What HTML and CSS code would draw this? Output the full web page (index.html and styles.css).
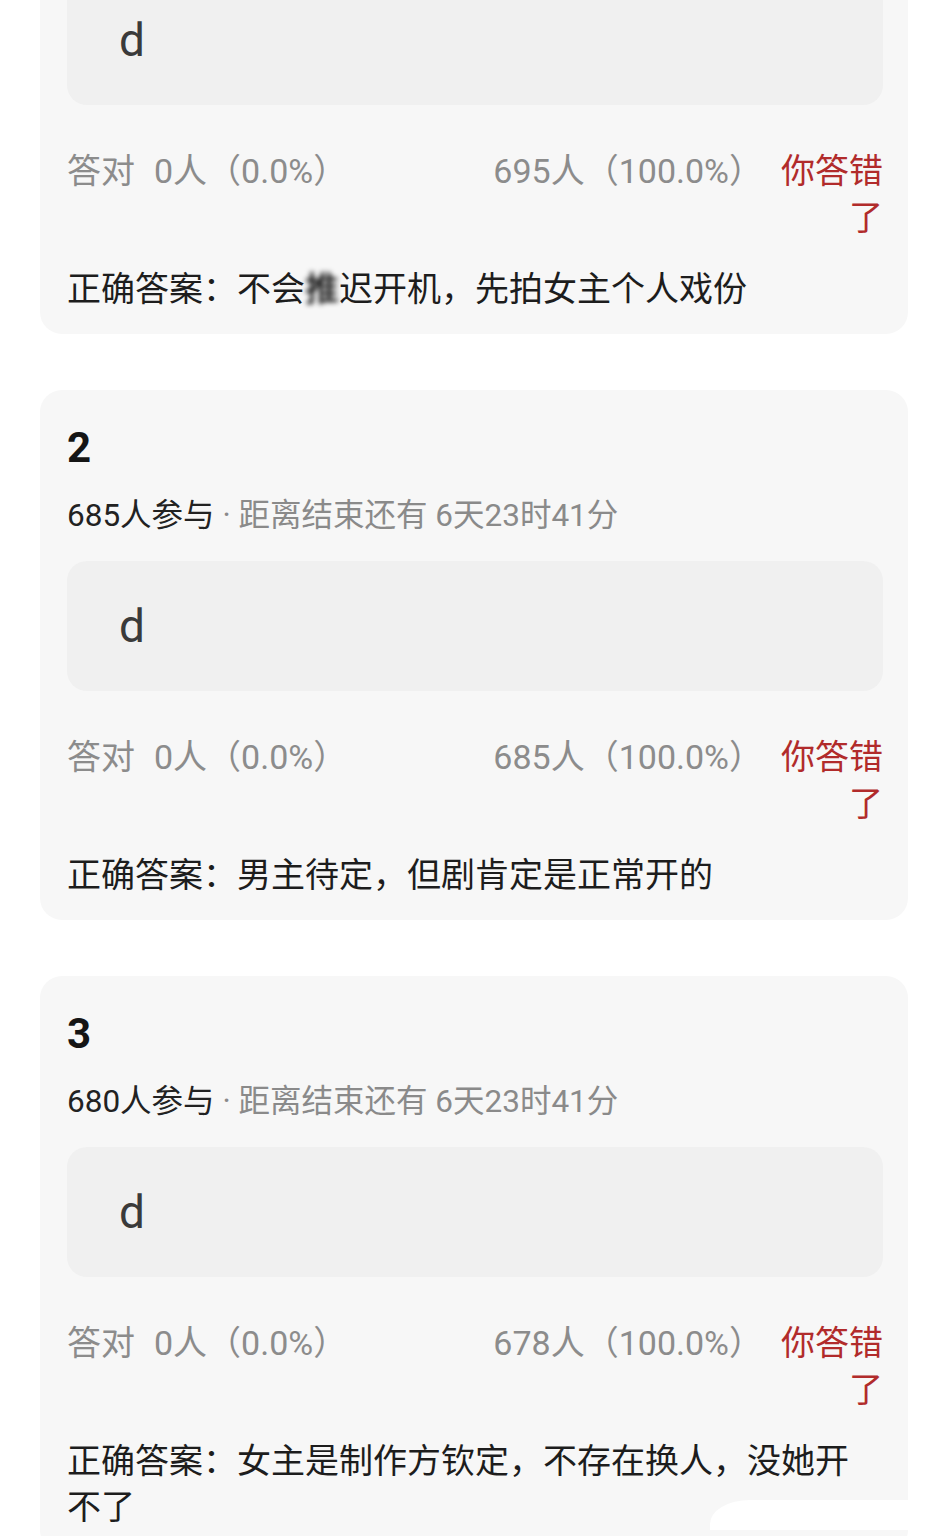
FILE: index.html
```html
<!DOCTYPE html>
<html lang="zh-CN">
<head>
<meta charset="utf-8">
<title>竞猜结果</title>
<link rel="stylesheet" href="styles.css">
</head>
<body>
<main class="feed">
  <section class="card">
    <h2 class="num">1</h2>
    <p class="meta"><span class="count">695人参与</span><span class="remain"> · 距离结束还有 6天23时41分</span></p>
    <div class="option"><span class="opt-text">d</span></div>
    <div class="stats">
      <span class="right"><span class="label">答对</span>0人（0.0%）</span>
      <span class="wrong">695人（100.0%）</span>
      <span class="verdict">你答错了</span>
    </div>
    <p class="answer">正确答案：不会<span class="blur">推</span>迟开机，先拍女主个人戏份</p>
  </section>

  <section class="card">
    <h2 class="num">2</h2>
    <p class="meta"><span class="count">685人参与</span><span class="remain"> · 距离结束还有 6天23时41分</span></p>
    <div class="option"><span class="opt-text">d</span></div>
    <div class="stats">
      <span class="right"><span class="label">答对</span>0人（0.0%）</span>
      <span class="wrong">685人（100.0%）</span>
      <span class="verdict">你答错了</span>
    </div>
    <p class="answer">正确答案：男主待定，但剧肯定是正常开的</p>
  </section>

  <section class="card">
    <h2 class="num">3</h2>
    <p class="meta"><span class="count">680人参与</span><span class="remain"> · 距离结束还有 6天23时41分</span></p>
    <div class="option"><span class="opt-text">d</span></div>
    <div class="stats">
      <span class="right"><span class="label">答对</span>0人（0.0%）</span>
      <span class="wrong">678人（100.0%）</span>
      <span class="verdict">你答错了</span>
    </div>
    <p class="answer">正确答案：女主是制作方钦定，不存在换人，没她开不了</p>
  </section>
</main>
<div class="corner"></div>
</body>
</html>
```

FILE: styles.css
```css
html, body {
  margin: 0;
  padding: 0;
  background: #ffffff;
}

body {
  font-family: Roboto, "Noto Sans CJK SC", sans-serif;
  color: #1f1f1f;
  overflow: hidden;
  position: relative;
  height: 1536px;
}

.feed {
  margin-top: -196px;
  padding: 0 40px;
  display: flex;
  flex-direction: column;
  gap: 56px;
}

.card {
  background: #f7f7f7;
  border-radius: 22px;
  padding: 33px 25px 22px 27px;
}

.num {
  margin: 0;
  font-size: 42px;
  line-height: 50px;
  font-weight: 700;
  color: #151515;
}

.meta {
  margin: 21px 0 0;
  font-size: 31.5px;
  line-height: 44px;
}

.count {
  color: #222;
}

.remain {
  color: #8a8a8a;
}

.option {
  margin-top: 23px;
  height: 130px;
  background: #f0f0f0;
  border-radius: 20px;
  display: flex;
  align-items: center;
  padding-left: 52px;
}

.opt-text {
  font-size: 46px;
  color: #3a3a3a;
}

.stats {
  margin-top: 43px;
  display: flex;
  align-items: flex-start;
  font-size: 34px;
  line-height: 47px;
  color: #8c8c8c;
}

.right {
  flex: 1;
}

.label {
  margin-right: 19px;
}

.wrong {
  margin-right: 18px;
}

.verdict {
  width: 3em;
  text-align: right;
  color: #b12b2b;
}

.answer {
  margin: 24px 0 0;
  padding-right: 14px;
  font-size: 34px;
  line-height: 46px;
  color: #1d1d1d;
}

.blur {
  display: inline-block;
  color: #111;
  filter: blur(2.5px);
  text-shadow: 0 0 2px #000;
}

.corner {
  position: absolute;
  right: 40px;
  bottom: 6px;
  width: 198px;
  height: 30px;
  background: #ffffff;
  border-top-left-radius: 40px 24px;
}
```
